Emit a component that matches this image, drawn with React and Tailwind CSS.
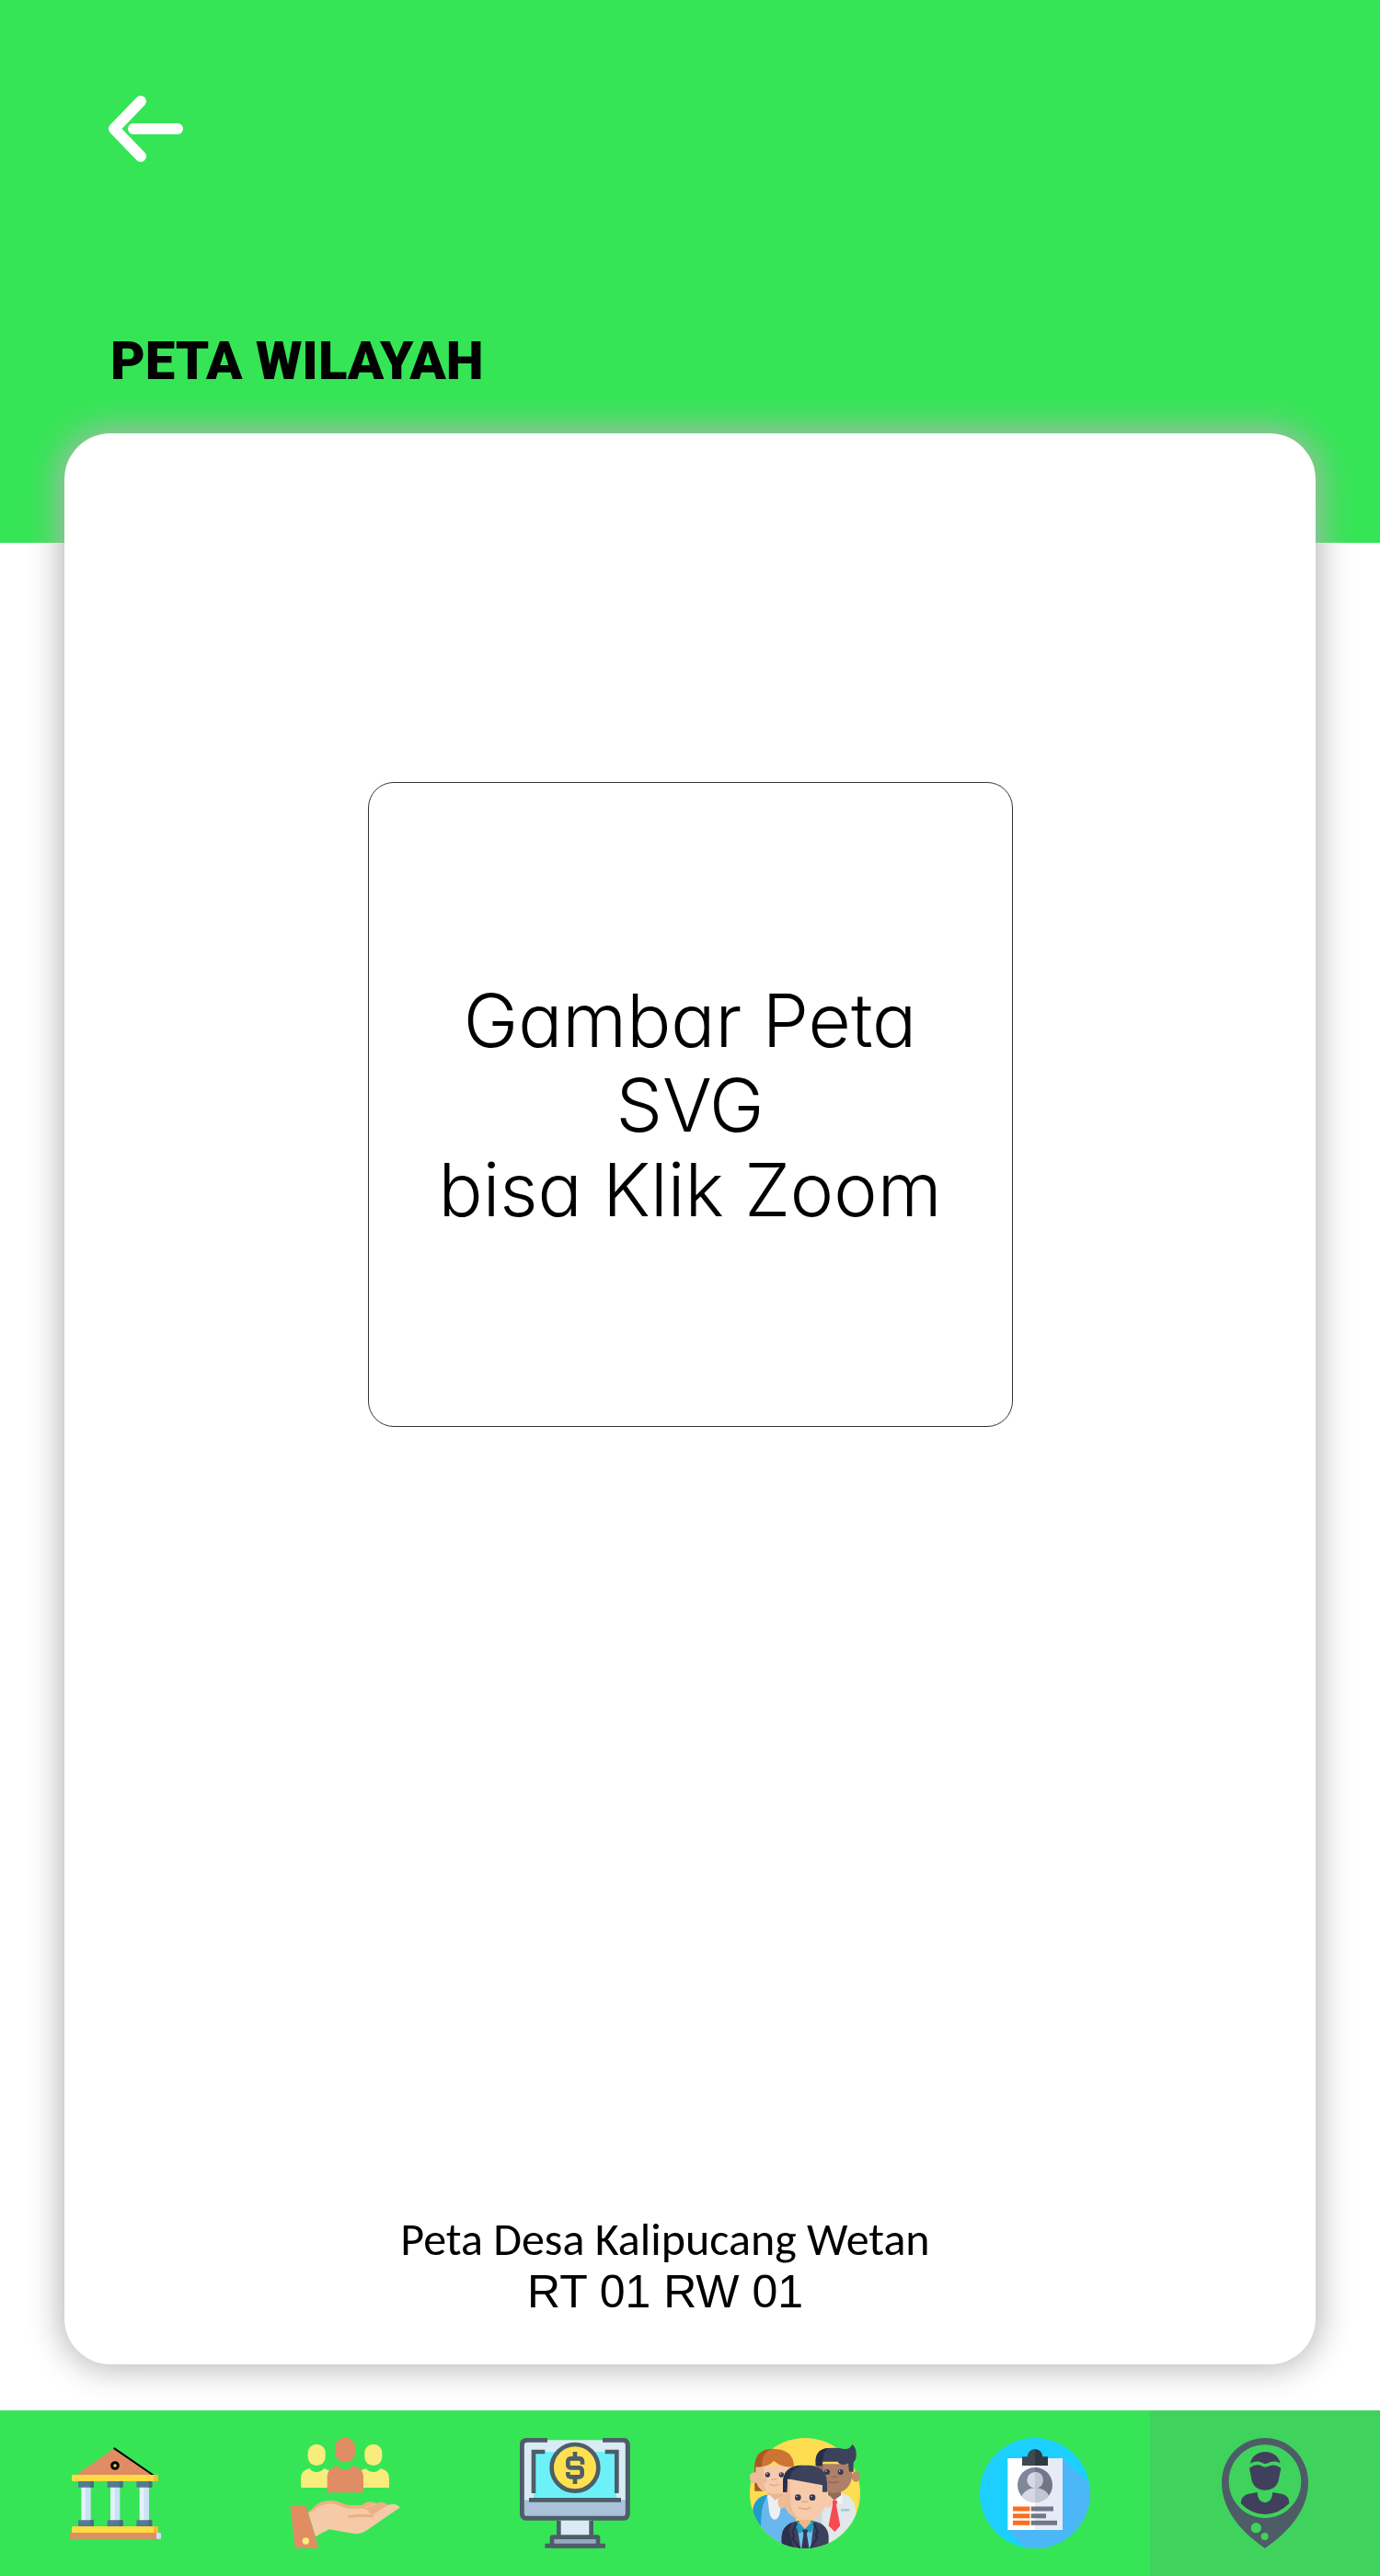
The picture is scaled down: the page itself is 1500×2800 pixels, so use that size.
const BankIcon = () => (
  <svg viewBox="45 60 360 360" className="size-[120px]" aria-hidden="true">
    <path d="M97 181 L223 94 L350 181 Z" fill="#e18d64" />
    <path d="M223 94 L348 180" stroke="#000" strokeWidth="6" strokeLinecap="round" />
    <circle cx="225" cy="150" r="10" fill="#ffda44" stroke="#000" strokeWidth="9" />
    {[130, 225, 320].map((x) => (
      <g key={x}>
        <rect x={x - 15} y="218" width="16" height="112" fill="#e5f2fb" />
        <rect x={x - 1} y="218" width="17" height="112" fill="#cbe2f5" />
        {[201, 328].map((y) => (
          <g key={y}>
            <rect x={x - 25} y={y} width="51" height="20" rx="2" fill="#547b91" />
            <rect x={x + 14} y={y} width="12" height="20" rx="2" fill="#4b6b82" />
          </g>
        ))}
      </g>
    ))}
    <rect x="84" y="180" width="282" height="21" rx="3" fill="#ffdb45" />
    <rect x="351" y="180" width="15" height="21" rx="3" fill="#ffb73e" />
    <rect x="84" y="348" width="282" height="21" rx="3" fill="#ffdb45" />
    <rect x="351" y="348" width="15" height="21" rx="3" fill="#ffb73e" />
    <rect x="75" y="369" width="300" height="20" rx="3" fill="#e18d64" />
    <rect x="360" y="369" width="15" height="20" rx="2" fill="#cbe2f5" />
  </svg>
);

const AidIcon = () => (
  <svg viewBox="45 60 360 360" className="size-[120px]" aria-hidden="true">
    <g fill="#f8ec7d">
      <rect x="104" y="80" width="57" height="70" rx="28" />
      <rect x="289" y="80" width="57" height="70" rx="28" />
      <path d="M81 222 V191 Q82 165 109 159 Q118 171 132 171 Q147 171 157 159 L176 167 V222 Z" />
      <path d="M369 222 V191 Q368 165 341 159 Q332 171 318 171 Q303 171 293 159 L274 167 V222 Z" />
    </g>
    <rect x="193" y="59" width="65" height="80" rx="32" fill="#e18d64" />
    <path d="M167 238 V184 Q168 158 200 150 Q208 163 226 163 Q243 163 251 150 Q284 158 285 184 V238 Z" fill="#e18d64" />
    <path d="M102 302 C126 291 128 265 178 264 C205 263 220 279 244 279 H279 C290 269 304 265 322 269 L329 275 C341 267 354 269 364 280 L316 316 L200 320 Z" fill="#ebb183" />
    <path d="M105 304 C131 298 132 278 172 275 C205 273 214 290 236 290 H286 Q303 292 306 309 L364 279 Q389 270 405 286 L302 357 Q283 371 260 373 L174 358 Q154 366 129 382 Z" fill="#f6caa6" />
    <path d="M289 287 L334 273 M311 303 L361 278" stroke="#f6caa6" strokeWidth="3" fill="none" />
    <path d="M303 292 L330 274 Q348 264 364 279 L315 311 Z" fill="#ebb183" />
    <path d="M238 316 L256 314 Q285 311 314 315" stroke="#ebb183" strokeWidth="9" strokeLinecap="round" fill="none" />
    <path d="M46 280 H97 L139 419 H62 Z" fill="#e18d64" />
    <circle cx="97" cy="396" r="11" fill="#f8ec7d" />
  </svg>
);

const FinanceIcon = () => (
  <svg viewBox="45 60 360 360" className="size-[120px]" aria-hidden="true">
    <rect x="53" y="67" width="344" height="255" rx="12" fill="#d9ecf6" />
    <path d="M53 262 H397 V308 Q397 322 383 322 H67 Q53 322 53 308 Z" fill="#aac1da" />
    <rect x="90" y="105" width="270" height="157" fill="#6df1f9" />
    <path d="M135 67 H70 Q52 67 52 84 V305 Q52 322 69 322 H381 Q397 322 397 305 V84 Q397 67 380 67 H315" fill="none" stroke="#4d5e68" strokeWidth="15" />
    <path d="M75 262 H375 M90 240 V105 H127 M323 105 H361 V240" fill="none" stroke="#4d5e68" strokeWidth="14" />
    <circle cx="225" cy="157" r="76" fill="#ffe14f" stroke="#4d5e68" strokeWidth="14" />
    <path d="M225 105 V127 M225 188 V210 M249 146 V136 Q248 127 239 127 H211 Q202 128 202 137 V148 Q203 157 212 157 H239 Q248 158 248 167 V178 Q247 187 238 187 H211 Q202 186 202 178 V171" fill="none" stroke="#4d5e68" strokeWidth="14" />
    <rect x="172" y="329" width="106" height="50" fill="#d9ecf6" />
    <path d="M172 329 V382 M278 329 V382" stroke="#4d5e68" strokeWidth="14" />
    <rect x="150" y="383" width="150" height="29" rx="3" fill="#94aabd" stroke="#4d5e68" strokeWidth="14" />
    <path d="M127 412 H324" stroke="#4d5e68" strokeWidth="15" />
  </svg>
);

const PeopleIcon = () => (
  <svg viewBox="45 60 360 360" className="size-[120px]" aria-hidden="true">
    <defs>
      <clipPath id="people-disc">
        <circle cx="225" cy="240" r="180" />
      </clipPath>
    </defs>
    <circle cx="225" cy="240" r="180" fill="#ffdd50" />
    <g clipPath="url(#people-disc)">
      <path d="M55 420 V294 Q60 253 102 245 H150 Q190 255 195 300 V420 Z" fill="#68b7ee" />
      <path d="M55 420 V294 Q60 253 102 245 L92 270 Q78 290 82 420 Z" fill="#219bcb" />
      <path d="M255 420 V270 Q265 243 300 240 H343 Q388 248 391 300 V420 Z" fill="#dfe8eb" />
      <path d="M255 420 V270 Q260 248 290 242 L280 280 V420 Z" fill="#cbd8dd" />
    </g>
    <path d="M60 150 L61 233 H110 V150 Z" fill="#a75a24" />
    <ellipse cx="59" cy="190" rx="15" ry="18" fill="#edbb98" />
    <rect x="104" y="220" width="48" height="48" fill="#edb58f" />
    <path d="M102 248 Q108 238 126 263 L150 250 L144 300 Q140 327 123 326 Q108 322 106 280 Z" fill="#eeeff0" />
    <path d="M65 148 H188 V190 Q184 242 126 243 Q65 238 65 190 Z" fill="#f6caaa" />
    <path d="M65 148 H90 V180 Q85 205 100 236 Q65 223 65 190 Z" fill="#edbb98" />
    <path d="M61 153 Q62 95 120 95 Q188 96 189 153 Q151 159 124 135 Q100 158 61 153 Z" fill="#cd7435" />
    <path d="M61 153 Q62 96 119 95 Q84 106 84 153 Q70 156 61 153 Z" fill="#a75a24" />
    <circle cx="93" cy="197" r="8" fill="#efb795" />
    <circle cx="103" cy="180" r="8" fill="#333a50" />
    <circle cx="148" cy="180" r="8" fill="#333a50" />
    <circle cx="101" cy="177" r="2" fill="#fff" />
    <circle cx="146" cy="177" r="2" fill="#fff" />
    <path d="M117 195 H132 M110 211 Q125 218 139 211" stroke="#e5ab8a" strokeWidth="4" strokeLinecap="round" fill="none" />

    <ellipse cx="391" cy="186" rx="14" ry="17" fill="#bd8b70" />
    <rect x="300" y="220" width="42" height="46" fill="#976b56" />
    <path d="M263 145 H378 V188 Q370 237 320 239 Q268 234 263 188 Z" fill="#ad8069" />
    <path d="M263 145 H284 V180 Q282 210 298 234 Q268 224 263 188 Z" fill="#976b56" />
    <path d="M260 151 V129 Q264 95 302 93 Q334 91 351 96 Q373 98 379 80 Q394 92 392 119 Q390 134 383 139 V170 H369 L366 143 Q343 153 331 137 H283 L280 151 Z" fill="#3d425c" />
    <path d="M260 151 V129 Q264 95 303 93 Q282 103 283 137 L280 151 Z" fill="#282d49" />
    <circle cx="297" cy="171" r="9" fill="#333a50" />
    <circle cx="341" cy="171" r="9" fill="#333a50" />
    <circle cx="294" cy="168" r="2" fill="#fff" />
    <circle cx="338" cy="168" r="2" fill="#fff" />
    <path d="M312 187 H328 M303 202 Q319 209 334 202" stroke="#946650" strokeWidth="4" strokeLinecap="round" fill="none" />
    <path d="M301 246 L320 263 L344 245 L349 274 L326 270 L301 278 Z" fill="#eff3f4" />
    <path d="M313 264 L325 262 L331 268 L327 279 L340 346 L322 366 L302 346 L315 279 Z" fill="#f54b50" />
    <path d="M342 295 H370" stroke="#aac9d1" strokeWidth="8" />

    <g clipPath="url(#people-disc)">
      <path d="M149 425 V380 Q153 341 198 331 H253 Q299 341 302 380 V425 Z" fill="#3d425c" />
      <path d="M149 425 V380 Q152 348 182 335 L174 360 L188 425 Z" fill="#2c3150" />
      <path d="M198 335 H253 L243 425 H211 Z" fill="#71bff0" />
      <path d="M202 328 L224 358 L248 326 L257 345 L242 370 L225 358 L207 371 L193 347 Z" fill="#219bbd" />
      <path d="M216 361 L226 357 L235 361 L231 373 L239 425 H213 L220 373 Z" fill="#333a50" />
      <path d="M198 338 L184 367 L190 381 L184 387 L212 425 M253 338 L267 365 L260 377 L266 384 L239 425" fill="none" stroke="#282d49" strokeWidth="6" />
    </g>
    <path d="M206 318 H243 V337 L225 356 L206 337 Z" fill="#edb58f" />
    <ellipse cx="151" cy="269" rx="15" ry="20" fill="#edbb98" />
    <ellipse cx="300" cy="268" rx="15" ry="20" fill="#f6caaa" />
    <path d="M154 195 H296 V252 Q292 326 225 328 Q157 322 154 252 Z" fill="#f6caaa" />
    <path d="M154 200 H177 V260 Q179 302 205 325 Q155 309 154 252 Z" fill="#edbb98" />
    <path d="M153 236 V205 Q154 149 215 149 H240 Q295 153 297 205 V236 H282 V214 L168 193 L166 236 Z" fill="#3d425c" />
    <path d="M153 236 V205 Q154 149 218 149 Q177 158 176 194 L168 193 L166 236 Z" fill="#282d49" />
    <circle cx="202" cy="254" r="10" fill="#333a50" />
    <circle cx="249" cy="254" r="10" fill="#333a50" />
    <circle cx="198" cy="251" r="2" fill="#fff" />
    <circle cx="246" cy="251" r="2" fill="#fff" />
    <path d="M216 268 H233 M207 287 Q225 296 242 287" stroke="#e5a98a" strokeWidth="5" strokeLinecap="round" fill="none" />
  </svg>
);

const ProfileIcon = () => (
  <svg viewBox="45 60 360 360" className="size-[120px]" aria-hidden="true">
    <defs>
      <clipPath id="profile-disc">
        <circle cx="225" cy="240" r="180" />
      </clipPath>
      <clipPath id="profile-avatar">
        <circle cx="225" cy="213" r="57" />
      </clipPath>
    </defs>
    <circle cx="225" cy="240" r="180" fill="#1ccfff" />
    <path d="M315 127 L420 225 V430 H205 L136 360 Z" fill="#4bb7f7" clipPath="url(#profile-disc)" />
    <rect x="136" y="126" width="90" height="234" fill="#fff" />
    <rect x="225" y="126" width="90" height="234" fill="#e7ebf5" />
    <path d="M183 121 H200 Q203 97 225 96 V150 H183 Z" fill="#3e4a54" />
    <path d="M267 121 H250 Q247 97 225 96 V150 H267 Z" fill="#303a44" />
    <g clipPath="url(#profile-avatar)">
      <rect x="168" y="156" width="57" height="115" fill="#7f879a" />
      <rect x="225" y="156" width="58" height="115" fill="#707789" />
      <circle cx="225" cy="197" r="26" fill="#d6d9e5" />
      <ellipse cx="225" cy="271" rx="49" ry="48" fill="#d6d9e5" />
      <path d="M225 171 Q251 171 251 197 Q251 223 225 223 Z M225 223 Q274 225 274 271 H225 Z" fill="#c2c6d4" />
    </g>
    <path d="M153 291 H208 M153 314 H208 M153 337 H208" stroke="#ff6c1e" strokeWidth="15" />
    <path d="M212 291 H285 M212 314 H261 M212 337 H297" stroke="#707789" strokeWidth="15" />
  </svg>
);

const MapPinIcon = () => (
  <svg viewBox="255 330 360 360" className="size-[120px]" aria-hidden="true">
    <path
      fillRule="evenodd"
      fill="#4d5c67"
      d="M435 330 C513 330 576 394 576 475 C576 567 510 638 435 690 C360 638 294 567 294 475 C294 394 357 330 435 330 Z M435 352 C370 352 317 405 317 472 C317 538 370 591 435 591 C500 591 553 538 553 472 C553 405 500 352 435 352 Z M406 606 A17 17 0 1 0 406 640 A17 17 0 1 0 406 606 Z M434 639 A12 12 0 1 0 434 663 A12 12 0 1 0 434 639 Z"
    />
    <g fill="#40405c">
      <path d="M387 413 C391 390 411 375 436 375 C460 375 481 390 485 413 C471 403 455 407 445 412 Q435 417 425 410 Q406 402 387 413 Z" />
      <path d="M384 428 Q407 412 423 421 Q435 429 450 421 Q467 413 487 428 L479 469 C474 489 457 500 435 500 C414 500 397 489 392 469 Z" />
      <path d="M378 513 L410 507 Q411 539 435 541 Q458 539 460 507 L493 513 Q514 519 514 543 Q481 578 435 579 Q389 578 356 543 Q358 519 378 513 Z" />
    </g>
  </svg>
);

const tabs = [
  { label: "Pemerintahan", Icon: BankIcon },
  { label: "Bantuan", Icon: AidIcon },
  { label: "Keuangan", Icon: FinanceIcon },
  { label: "Warga", Icon: PeopleIcon },
  { label: "Profil", Icon: ProfileIcon },
  { label: "Peta", Icon: MapPinIcon, active: true },
];

export default function App() {
  return (
    <div className="flex min-h-screen flex-col bg-white text-black">
      <header className="flex h-[590px] shrink-0 flex-col items-start bg-[#35e556] px-[116px] pt-[100px]">
        <button type="button" aria-label="Kembali" className="h-20 w-[84px]">
          <svg viewBox="0 0 84 80" className="h-20 w-[84px]" fill="none" stroke="#fff" strokeWidth="12" strokeLinecap="round" strokeLinejoin="round">
            <path d="M37 10 L8 40 L37 70" />
            <path d="M29 40 H77" />
          </svg>
        </button>
        <h1 className="mt-[180px] pl-1 font-['Roboto',sans-serif] text-[58px] leading-[64px] font-black">PETA WILAYAH</h1>
      </header>

      <main className="-mt-[119px] flex grow flex-col px-[70px] pb-[50px]">
        <section className="flex grow flex-col items-center justify-between gap-20 rounded-[50px] bg-white px-16 pt-[379px] pb-[50px] shadow-[0_0_36px_4px_#b4b4b4]">
          <button
            type="button"
            className="flex aspect-square w-full max-w-[701px] items-center justify-center rounded-[28px] border border-[#333] text-center font-['Inter',sans-serif] text-[80px] leading-[92px] font-light [font-feature-settings:'cv11']"
          >
            <span>
              Gambar Peta
              <br />
              SVG
              <br />
              bisa Klik Zoom
            </span>
          </button>
          <div className="pr-[54px] text-center">
            <p className="font-['Carlito','Lato',sans-serif] text-[50px] leading-[56px]">Peta Desa Kalipucang Wetan</p>
            <p className="font-['Liberation_Sans',sans-serif] text-[50px] leading-[58px]">RT 01 RW 01</p>
          </div>
        </section>
      </main>

      <nav className="grid h-[180px] shrink-0 grid-cols-6 bg-[#35e556]">
        {tabs.map(({ label, Icon, active }) => (
          <a
            key={label}
            href="#"
            aria-label={label}
            aria-current={active ? "page" : undefined}
            className={active ? "flex items-center justify-center bg-[#3fd25c]" : "flex items-center justify-center"}
          >
            <Icon />
          </a>
        ))}
      </nav>
    </div>
  );
}
